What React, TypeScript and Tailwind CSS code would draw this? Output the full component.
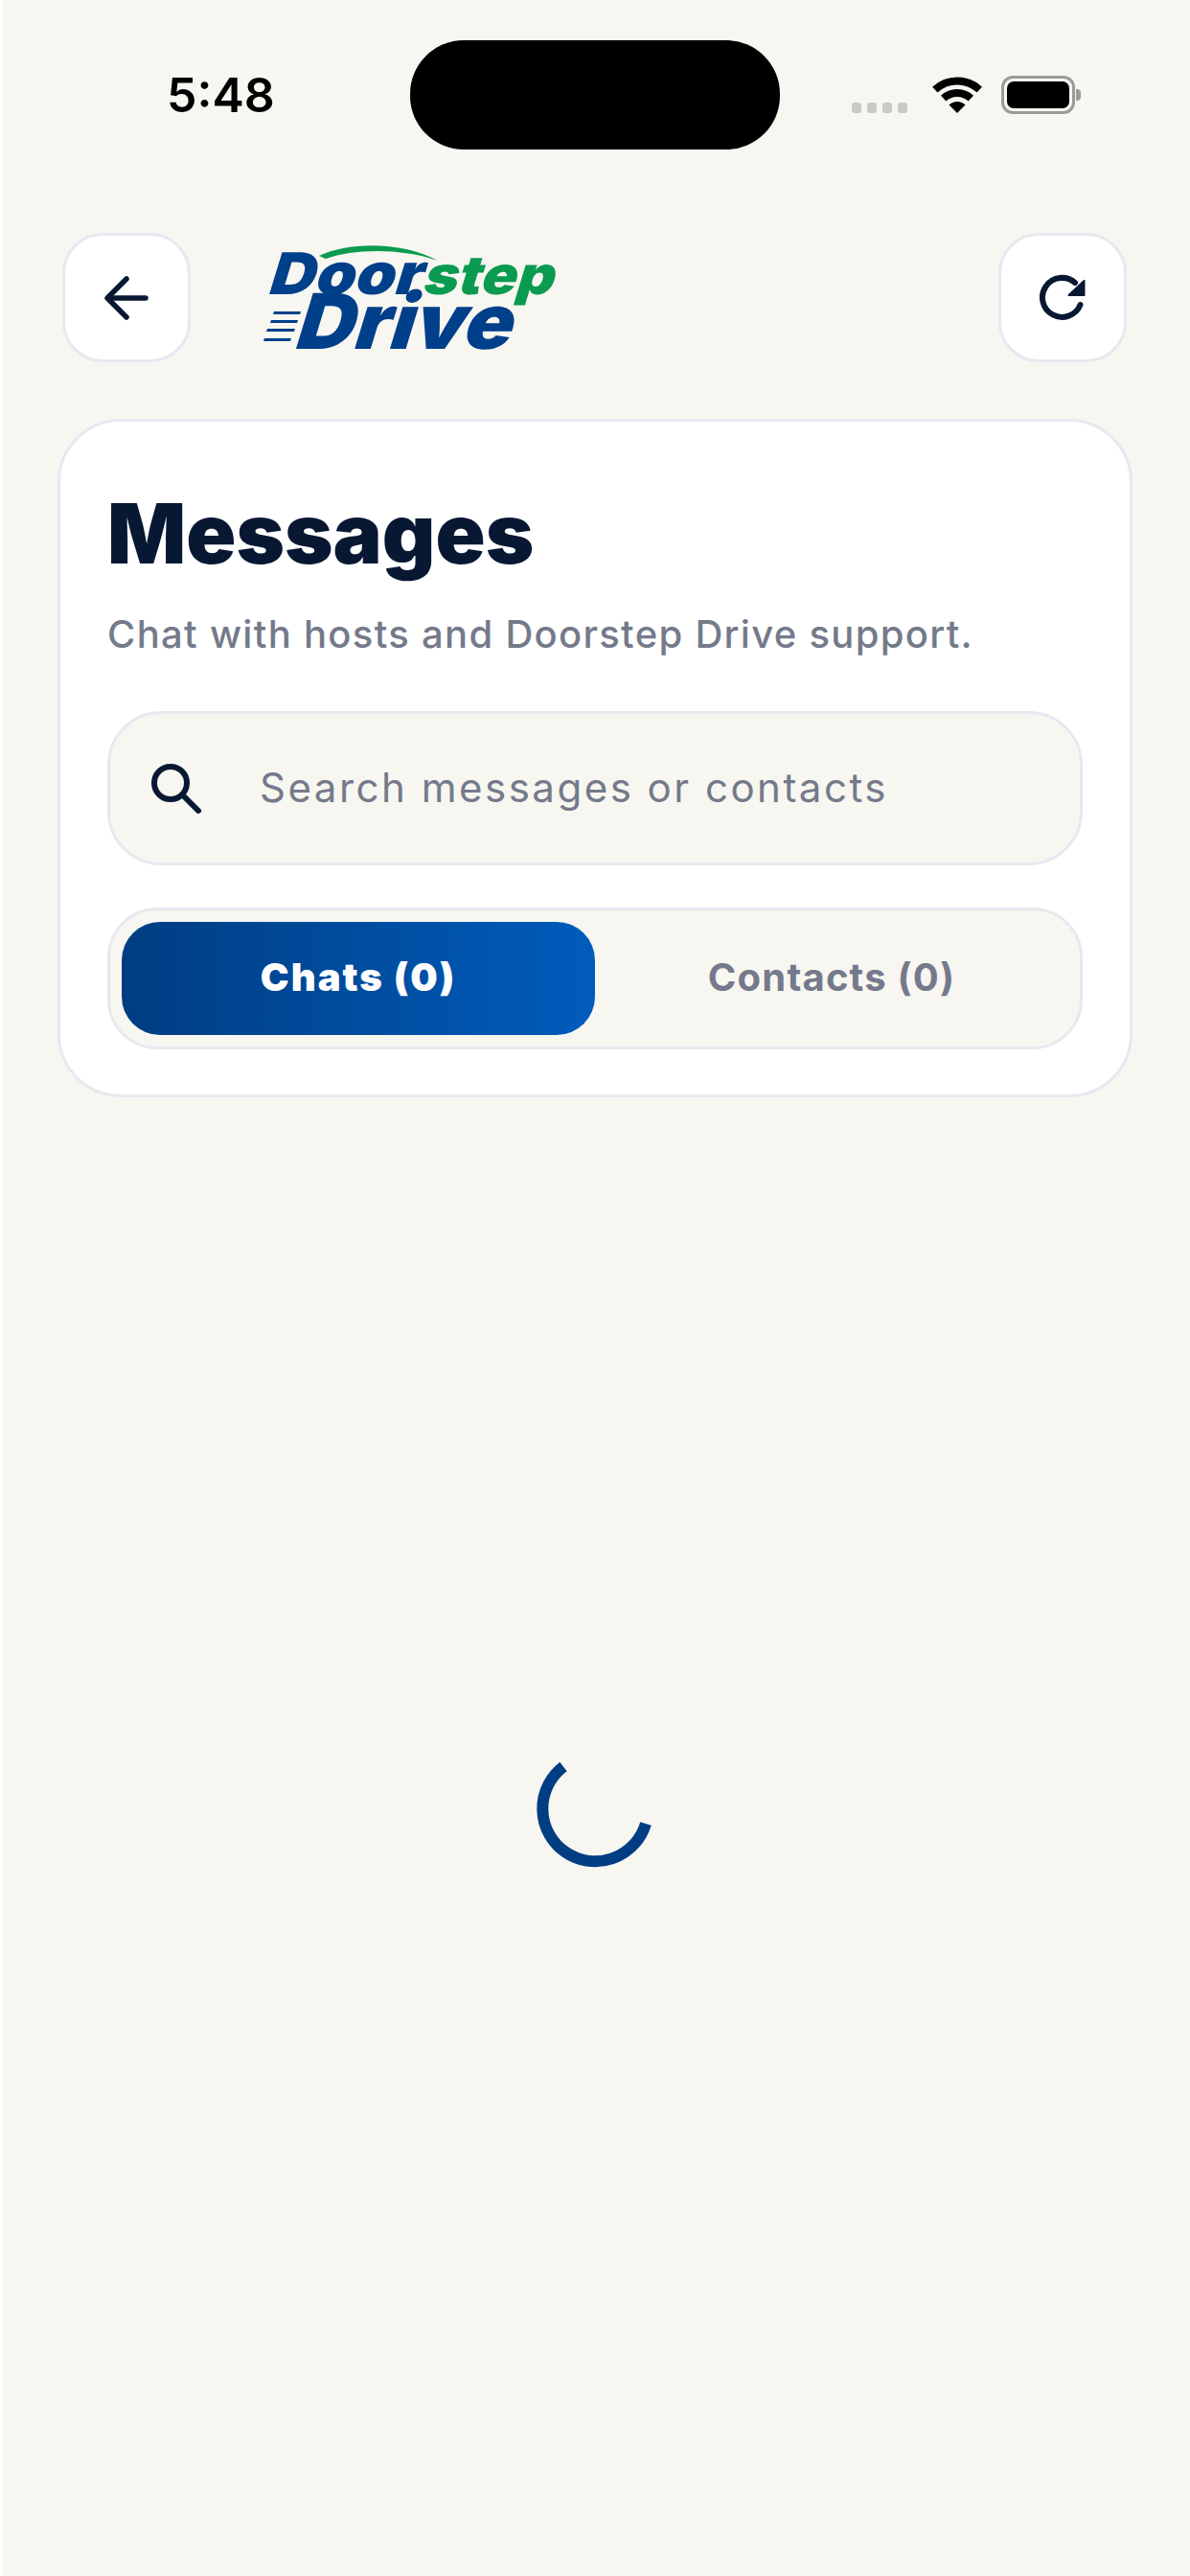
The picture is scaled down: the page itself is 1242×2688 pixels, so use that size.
const BG = "bg-[#f7f6f1]";

function WifiIcon() {
  return (
    <svg width="52" height="38" viewBox="0 0 52 38" fill="none" className="mr-[20px]">
      <path d="M2.8 13.6 A34 34 0 0 1 49.2 13.6" stroke="#000" strokeWidth="8" />
      <path d="M11.7 22.6 A21 21 0 0 1 40.3 22.6" stroke="#000" strokeWidth="8" />
      <path d="M26 38 L17.5 29.5 A12 12 0 0 1 34.5 29.5 Z" fill="#000" />
    </svg>
  );
}

function BatteryIcon() {
  return (
    <div className="flex items-center">
      <div className="h-[40px] w-[77px] rounded-[12px] border-[3px] border-[#9b9b98] p-[3px]">
        <div className="h-full w-full rounded-[7px] bg-black" />
      </div>
      <div className="ml-[1px] h-[12px] w-[5px] rounded-r-[4px] bg-[#9b9b98]" />
    </div>
  );
}

function StatusBar() {
  return (
    <div className="flex h-[243px] items-start pt-[42px]">
      <div className="flex h-[114px] items-center">
        <span className="ml-[171px] w-[254px] font-['Inter',sans-serif] text-[50px] leading-none font-semibold text-black">
          5:48
        </span>
        <div className="h-[114px] w-[386px] rounded-[56px] bg-black" />
        <div className="ml-[75px] mr-[26px] mt-[27px] flex gap-[6px]">
          {[0, 1, 2, 3].map((i) => (
            <span key={i} className="h-[11px] w-[10px] rounded-[3px] bg-[#c9c9c7]" />
          ))}
        </div>
        <WifiIcon />
        <BatteryIcon />
      </div>
    </div>
  );
}

// logo keeps real text, squeezed into the measured widths and slanted with skew
function Logo() {
  const font = "Inter, 'Liberation Sans', sans-serif";
  return (
    <svg width="320" height="142" viewBox="0 0 320 142" className="ml-[71px] shrink-0">
      <text transform="translate(8 64) skewX(-17)" fontFamily={font} fontSize="60" fontWeight="900" fill="#003f8a" textLength="160" lengthAdjust="spacingAndGlyphs">
        Door
      </text>
      <text transform="translate(169 64) skewX(-17)" fontFamily={font} fontSize="56" fontWeight="900" fill="#0a9b50" textLength="137" lengthAdjust="spacingAndGlyphs">
        step
      </text>
      <text transform="translate(35 121) skewX(-17)" fontFamily={font} fontSize="80" fontWeight="900" fill="#003f8a" textLength="226" lengthAdjust="spacingAndGlyphs">
        Drive
      </text>
      <path d="M63 24 C95 9 150 9 187 29 C150 16 100 16 70 27 Z" fill="#0a9b50" />
      <g fill="#003f8a">
        <path d="M16 82 H44 L43 85 H15 Z" />
        <path d="M13 91 H41 L40 94 H12 Z" />
        <path d="M9 100 H38 L37 103 H8 Z" />
        <path d="M6 110 H34 L33 113 H5 Z" />
      </g>
    </svg>
  );
}

function IconButton({ children }: { children: React.ReactNode }) {
  return (
    <button className="flex h-[135px] w-[134px] items-center justify-center rounded-[42px] border-[3px] border-[#e6e9f0] bg-white">
      {children}
    </button>
  );
}

function Header() {
  return (
    <div className="flex h-[135px] items-start pl-[62px] pr-[66px]">
      <IconButton>
        <svg width="48" height="48" viewBox="0 0 48 48" fill="none" stroke="#081833" strokeWidth="5.5" strokeLinecap="round" strokeLinejoin="round">
          <path d="M44 24 H5" />
          <path d="M24 4 L4 24 L24 44" />
        </svg>
      </IconButton>
      <Logo />
      <div className="ml-auto">
        <IconButton>
          <svg width="50" height="50" viewBox="0 0 50 50" fill="none">
            <path d="M43.5 32 A20.5 20.5 0 1 1 38 9" stroke="#081833" strokeWidth="6" strokeLinecap="round" />
            <path d="M47.5 7 V22 H31.5 Z" fill="#081833" stroke="#081833" strokeWidth="2" strokeLinejoin="round" />
          </svg>
        </IconButton>
      </div>
    </div>
  );
}

function SearchBox() {
  return (
    <div className={`mt-[57px] flex h-[161px] items-center rounded-[56px] border-[3px] border-[#e6e9f0] ${BG}`}>
      <svg width="54" height="54" viewBox="0 0 54 54" fill="none" stroke="#081833" className="ml-[42px]">
        <circle cx="21" cy="21" r="17" strokeWidth="6" />
        <path d="M34 34 L50 50" strokeWidth="6" strokeLinecap="round" />
      </svg>
      <input
        placeholder="Search messages or contacts"
        className="mb-[2px] ml-[60px] flex-1 bg-transparent font-['Inter',sans-serif] text-[42px] tracking-[2.5px] text-[#747a8a] outline-none placeholder:text-[#747a8a]"
      />
    </div>
  );
}

function Tabs() {
  return (
    <div className={`mt-[44px] flex h-[148px] rounded-[52px] border-[3px] border-[#e6e9f0] p-[12px] ${BG}`}>
      <button className="flex-1 rounded-[40px] bg-gradient-to-r from-[#003d82] to-[#005cbc] pb-[2px] font-['Inter',sans-serif] text-[40px] font-black tracking-[2px] text-white">
        Chats (0)
      </button>
      <button className="flex-1 pb-[2px] font-['Inter',sans-serif] text-[40px] font-bold tracking-[1.2px] text-[#747a8a]">
        Contacts (0)
      </button>
    </div>
  );
}

function Spinner() {
  return (
    <div className="mt-[681px] flex justify-center pr-[3px]">
      <svg width="124" height="124" viewBox="0 0 124 124" fill="none">
        <path d="M29 17.5 A55 55 0 1 0 115 77" stroke="#003d82" strokeWidth="12" />
      </svg>
    </div>
  );
}

export default function App() {
  return (
    <div className="h-[2688px] w-[1242px] overflow-hidden bg-white pl-[3px]">
      <div className={`h-full ${BG}`}>
        <StatusBar />
        <Header />
        <div className="ml-[57px] mt-[59px] h-[708px] w-[1122px] rounded-[66px] border-[3px] border-[#e6e9f0] bg-white px-[49px] pt-[64px]">
          <h1 className="font-['Inter',sans-serif] text-[86px] leading-[106px] font-black text-[#081833]">
            Messages
          </h1>
          <p className="mt-[29px] font-['Inter',sans-serif] text-[40px] leading-[46px] font-medium tracking-[1.3px] text-[#747a8a]">
            Chat with hosts and Doorstep Drive support.
          </p>
          <SearchBox />
          <Tabs />
        </div>
        <Spinner />
      </div>
    </div>
  );
}
